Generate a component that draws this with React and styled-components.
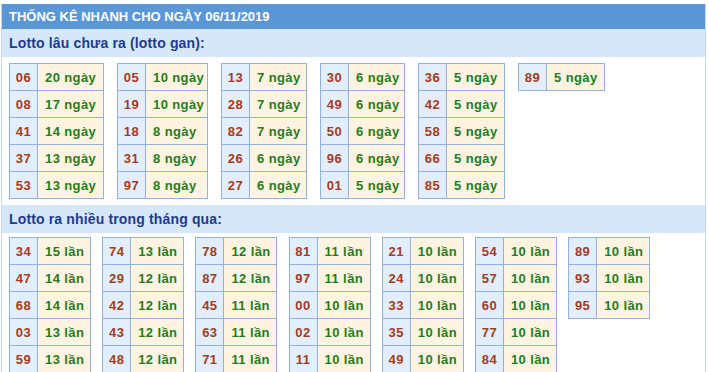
import React from "react";
import styled, { createGlobalStyle } from "styled-components";

const Global = createGlobalStyle`
  html, body { margin: 0; padding: 0; background: #fff; }
  body { font-family: "Liberation Sans", Arial, sans-serif; }
`;

const Wrapper = styled.div`
  margin: 4px 2px 0 1px;
  border-left: 1px solid #c9d7e8;
  border-right: 1px solid #c9d7e8;
`;

const Title = styled.div`
  background: #5b96d6;
  color: #fff;
  height: 25px;
  line-height: 25px;
  padding-left: 7px;
  font-size: 13px;
  font-weight: bold;
`;

const SubTitle = styled.div`
  background: #d6e7fa;
  color: #1d3c8e;
  height: 28px;
  line-height: 28px;
  padding-left: 7px;
  font-size: 14px;
  font-weight: bold;
  letter-spacing: 0.15px;
`;

const Grid = styled.div`
  display: flex;
  align-items: flex-start;
  gap: ${(p) => p.$gap}px;
  padding: ${(p) => p.$pt}px 7px ${(p) => p.$pb}px;
`;

const Table = styled.table`
  border-collapse: collapse;
  table-layout: fixed;
  width: ${(p) => p.$w}px;
  border: 1px solid #93b1e0;
`;

const Row = styled.tr`
  height: 27px;
`;

const Num = styled.td`
  background: #e3eefc;
  color: #a33b1c;
  border: 1px solid #93b1e0;
  font-size: 13px;
  font-weight: bold;
  letter-spacing: 0.5px;
  text-align: center;
  padding: 0;
  width: 27px;
`;

const Val = styled.td`
  background: #fff3e2;
  color: #1f7d1c;
  border: 1px solid #93b1e0;
  font-size: 13px;
  font-weight: bold;
  letter-spacing: 0.4px;
  padding: 0 0 0 7px;
  white-space: nowrap;
`;

const gan = [
  { w: 95, rows: [["06", "20 ngày"], ["08", "17 ngày"], ["41", "14 ngày"], ["37", "13 ngày"], ["53", "13 ngày"]] },
  { w: 91, rows: [["05", "10 ngày"], ["19", "10 ngày"], ["18", "8 ngày"], ["31", "8 ngày"], ["97", "8 ngày"]] },
  { w: 86, rows: [["13", "7 ngày"], ["28", "7 ngày"], ["82", "7 ngày"], ["26", "6 ngày"], ["27", "6 ngày"]] },
  { w: 85, rows: [["30", "6 ngày"], ["49", "6 ngày"], ["50", "6 ngày"], ["96", "6 ngày"], ["01", "5 ngày"]] },
  { w: 87, rows: [["36", "5 ngày"], ["42", "5 ngày"], ["58", "5 ngày"], ["66", "5 ngày"], ["85", "5 ngày"]] },
  { w: 87, rows: [["89", "5 ngày"]] },
];

const nhieu = [
  [["34", "15 lần"], ["47", "14 lần"], ["68", "14 lần"], ["03", "13 lần"], ["59", "13 lần"]],
  [["74", "13 lần"], ["29", "12 lần"], ["42", "12 lần"], ["43", "12 lần"], ["48", "12 lần"]],
  [["78", "12 lần"], ["87", "12 lần"], ["45", "11 lần"], ["63", "11 lần"], ["71", "11 lần"]],
  [["81", "11 lần"], ["97", "11 lần"], ["00", "10 lần"], ["02", "10 lần"], ["11", "10 lần"]],
  [["21", "10 lần"], ["24", "10 lần"], ["33", "10 lần"], ["35", "10 lần"], ["49", "10 lần"]],
  [["54", "10 lần"], ["57", "10 lần"], ["60", "10 lần"], ["77", "10 lần"], ["84", "10 lần"]],
  [["89", "10 lần"], ["93", "10 lần"], ["95", "10 lần"]],
];

function StatTable({ rows, w }) {
  return (
    <Table $w={w}>
      <tbody>
        {rows.map(([n, v], i) => (
          <Row key={i}>
            <Num>{n}</Num>
            <Val>{v}</Val>
          </Row>
        ))}
      </tbody>
    </Table>
  );
}

export default function App() {
  return (
    <>
      <Global />
      <Wrapper>
        <Title>THỐNG KÊ NHANH CHO NGÀY 06/11/2019</Title>
        <SubTitle>Lotto lâu chưa ra (lotto gan):</SubTitle>
        <Grid $gap={13} $pt={6} $pb={6}>
          {gan.map((t, i) => (
            <StatTable key={i} rows={t.rows} w={t.w} />
          ))}
        </Grid>
        <SubTitle>Lotto ra nhiều trong tháng qua:</SubTitle>
        <Grid $gap={11.2} $pt={4} $pb={0}>
          {nhieu.map((t, i) => (
            <StatTable key={i} rows={t} w={82} />
          ))}
        </Grid>
      </Wrapper>
    </>
  );
}
